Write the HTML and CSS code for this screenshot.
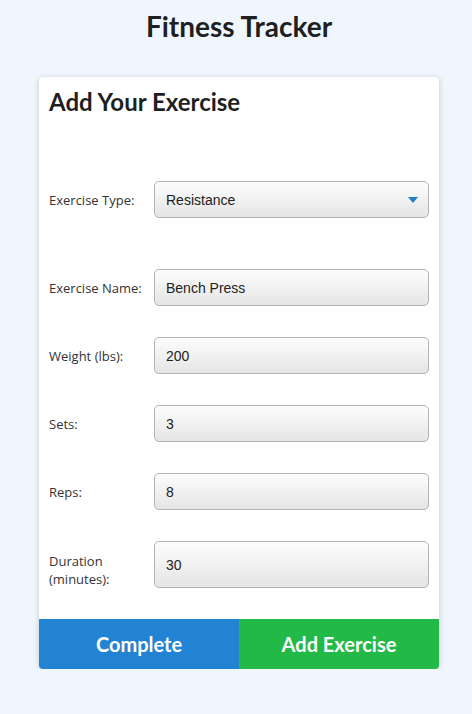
FILE: index.html
```html
<!DOCTYPE html>
<html lang="en">
<head>
<meta charset="utf-8">
<title>Fitness Tracker</title>
<link rel="stylesheet" href="styles.css">
</head>
<body>
<h1 class="page-title">Fitness Tracker</h1>
<div class="card">
  <div class="card-body">
    <h2 class="card-title">Add Your Exercise</h2>
    <form class="form">
      <div class="row row-type">
        <label class="label">Exercise Type:</label>
        <div class="select">
          <span class="select-value">Resistance</span>
          <svg class="caret" width="10" height="6" viewBox="0 0 10 6"><path d="M0 0 L10 0 L5 6 Z" fill="#1f80c4"/></svg>
        </div>
      </div>
      <div class="row">
        <label class="label">Exercise Name:</label>
        <div class="input">Bench Press</div>
      </div>
      <div class="row">
        <label class="label">Weight (lbs):</label>
        <div class="input">200</div>
      </div>
      <div class="row">
        <label class="label">Sets:</label>
        <div class="input">3</div>
      </div>
      <div class="row">
        <label class="label">Reps:</label>
        <div class="input">8</div>
      </div>
      <div class="row row-tall">
        <label class="label label-tall">Duration<br>(minutes):</label>
        <div class="input">30</div>
      </div>
    </form>
  </div>
  <div class="actions">
    <button class="btn btn-blue" type="button">Complete</button>
    <button class="btn btn-green" type="button">Add Exercise</button>
  </div>
</div>
</body>
</html>
```
FILE: styles.css
```css
* { box-sizing: border-box; }
html, body { margin: 0; padding: 0; }
body {
  background: #f0f6fe;
  font-family: "Lato", "Open Sans", sans-serif;
  color: #222;
  padding-left: 6px;
}
.page-title {
  margin: 0;
  padding-top: 9px;
  text-align: center;
  font-family: "Lato", sans-serif;
  font-weight: 700;
  font-size: 28px;
  line-height: 34px;
  color: #1f1f1f;
}
.card {
  width: 400px;
  margin: 34px auto 0;
  background: #fff;
  border-radius: 4px;
  box-shadow: 0 1px 6px rgba(0, 0, 0, 0.18);
  overflow: hidden;
}
.card-body {
  padding: 10px 10px 31px;
}
.card-title {
  margin: 0;
  font-family: "Lato", sans-serif;
  font-weight: 700;
  font-size: 24px;
  line-height: 29px;
  color: #1f1f1f;
}
.form {
  margin-top: 65px;
  display: flex;
  flex-direction: column;
  gap: 31px;
}
.row {
  display: flex;
  align-items: stretch;
}
.row-type { margin-bottom: 20px; }
.label {
  width: 105px;
  flex: none;
  display: flex;
  align-items: center;
  font-family: "Segoe UI", "Open Sans", sans-serif;
  font-size: 13px;
  line-height: 18px;
  color: #333;
}
.label-tall { padding-top: 11px; }
.input, .select {
  flex: 1;
  min-height: 37px;
  display: flex;
  align-items: center;
  padding: 0 11px;
  border: 1px solid #b3b3b3;
  border-radius: 5px;
  background: linear-gradient(#fdfdfd, #e5e5e5);
  font-family: "Liberation Sans", Arial, sans-serif;
  font-size: 14px;
  color: #222;
}
.select { justify-content: space-between; padding-right: 10px; }
.caret { display: block; }
.actions {
  display: flex;
}
.btn {
  flex: 1;
  height: 50px;
  border: 0;
  margin: 0;
  font-family: "Lato", sans-serif;
  font-weight: 700;
  font-size: 20px;
  color: #fff;
  cursor: pointer;
}
.btn-blue { background: #2283d2; }
.btn-green { background: #22b946; }
```
